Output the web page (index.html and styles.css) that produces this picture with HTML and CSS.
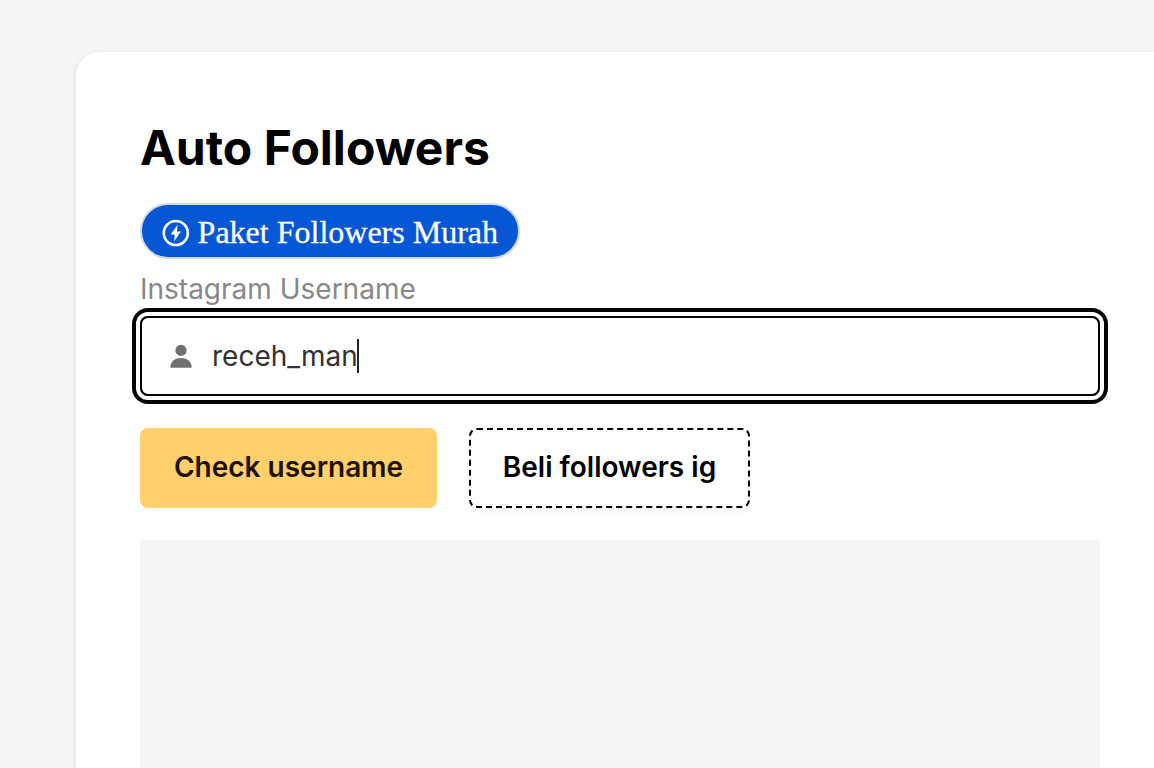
FILE: index.html
```
<!DOCTYPE html>
<html lang="id">
<head>
  <meta charset="UTF-8" />
  <title>Auto Followers</title>
  <meta name="viewport" content="width=device-width, initial-scale=1" />
  <link rel="stylesheet" href="styles.css">
</head>

<body>
  <main class="card">
    <h1>Auto Followers</h1>

    <div class="badge">
      <svg viewBox="0 0 28 28" aria-hidden="true">
        <circle cx="14" cy="14" r="12.2" />
        <path d="M15.8 5.6L8.8 15.4H12.9L12.4 22.4L19.2 12.6H15.1Z" />
      </svg>
      <span>Paket Followers Murah</span>
    </div>

    <form class="username-form">
      <label for="username">Instagram Username</label>
      <div class="input-field">
        <svg viewBox="0 0 22 24" aria-hidden="true">
          <circle cx="11" cy="6.4" r="5.6" />
          <path d="M0.3 22.8C0.8 17.2 5.4 14 11 14S21.2 17.2 21.7 22.8Q21.7 23.7 20.8 23.7H1.2Q0.3 23.7 0.3 22.8Z" />
        </svg>
        <span class="value" id="username" role="textbox" tabindex="0">receh_man</span>
        <span class="caret"></span>
      </div>

      <div class="actions">
        <button type="button" class="btn btn-check">Check username</button>
        <button type="button" class="btn btn-buy">Beli followers ig</button>
      </div>
    </form>

    <section class="result"></section>
  </main>
</body>
</html>
```

FILE: styles.css
```
:root {
  --page-bg: #f5f5f5;
  --brand: #0557d5;
  --check: #ffd06b;
  --muted: #888;
}

* { box-sizing: border-box; margin: 0; padding: 0; }

body {
  font-family: "Inter", sans-serif;
  background: var(--page-bg);
  color: #000;
  height: 100vh;
  padding: 52px 0 0 76px;
  overflow: hidden;
}

.card {
  display: flex;
  flex-direction: column;
  height: 100%;
  padding: 64px 54px 0 64px;
  background: #fff;
  border-radius: 24px 0 0 0;
  box-shadow: 0 2px 6px rgba(0, 0, 0, 0.1);
}

h1 {
  font-size: 48px;
  font-weight: 700;
  line-height: 64px;
  white-space: nowrap;
}

.badge {
  display: flex;
  align-items: center;
  gap: 8px;
  width: 380px;
  height: 56px;
  margin-top: 23px;
  padding: 3px 20px 0;
  border: 2px solid #cfd8ea;
  border-radius: 28px;
  background: var(--brand);
  color: #fff;
  font-family: "Liberation Serif", serif;
  font-size: 32px;
  -webkit-text-stroke: 0.3px #fff;
  white-space: nowrap;
}

.badge svg {
  width: 28px;
  height: 28px;
  fill: #fff;
}
.badge circle {
  fill: none;
  stroke: #fff;
  stroke-width: 2.6;
}

.username-form label {
  display: block;
  margin-top: 13px;
  font-size: 28px;
  line-height: 34px;
  color: var(--muted);
}

.input-field {
  display: flex;
  align-items: center;
  width: 960px;
  height: 80px;
  margin-top: 10px;
  padding: 0 28px;
  border: 2px solid #000;
  border-radius: 8px;
  box-shadow: 0 0 0 4px #fff, 0 0 0 8px #000;
}

.input-field svg {
  width: 22px;
  height: 24px;
  margin-right: 20px;
  fill: #707070;
}

.input-field .value {
  font-size: 28px;
  color: #333;
  outline: none;
}

.input-field .caret {
  width: 2px;
  height: 34px;
  margin-left: -1px;
  background: #222;
}

.actions {
  display: flex;
  gap: 32px;
  margin-top: 32px;
}

.btn {
  height: 80px;
  padding-bottom: 2px;
  border: none;
  border-radius: 8px;
  font-family: inherit;
  font-size: 28px;
  font-weight: 600;
  white-space: nowrap;
  cursor: pointer;
}

.btn-check {
  width: 297px;
  background: var(--check);
  color: #1f1000;
}

.btn-buy {
  width: 281px;
  background: #fff;
  color: #000;
  border: 2px dashed #000;
  box-shadow: 0 4px 4px rgba(0, 0, 0, 0.03);
}

.result {
  flex: 1;
  width: 960px;
  margin-top: 32px;
  background: var(--page-bg);
}
```
